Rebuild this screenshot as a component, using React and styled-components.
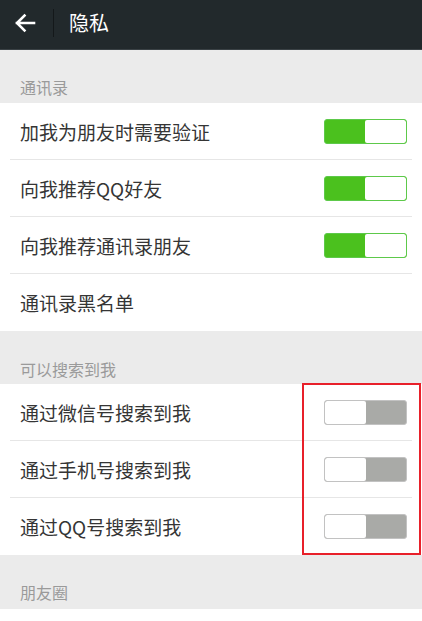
import React from "react";
import styled, { createGlobalStyle } from "styled-components";

const Global = createGlobalStyle`
  html, body { margin: 0; padding: 0; background: #ffffff; }
  body { font-family: "Noto Sans CJK SC", "Noto Sans", sans-serif; }
  * { box-sizing: border-box; }
`;

const Page = styled.div`
  width: 422px;
  min-height: 621px;
  background: #ffffff;
  display: flex;
  flex-direction: column;
`;

const Header = styled.header`
  height: 50px;
  background: #22292c;
  display: flex;
  align-items: center;
  border-bottom: 1px solid #3a4145;
`;

const BackButton = styled.div`
  width: 53px;
  height: 100%;
  display: flex;
  align-items: center;
  justify-content: center;
  padding-right: 4px;
  padding-bottom: 4px;
`;

const Divider = styled.div`
  width: 1px;
  height: 28px;
  background: #14181a;
  margin-bottom: 4px;
`;

const Title = styled.h1`
  margin: 0 0 4px 15px;
  font-size: 20px;
  font-weight: 400;
  color: #ffffff;
  line-height: 1;
`;

const SectionHeader = styled.div`
  height: ${(p) => p.$h}px;
  background: #ebebeb;
  display: flex;
  align-items: flex-end;
  padding: 0 0 ${(p) => p.$pb}px 20px;
  font-size: 16px;
  line-height: 20px;
  color: #9a9a9a;
`;

const Group = styled.div`
  position: relative;
  background: #ffffff;
`;

const Row = styled.div`
  height: 57px;
  padding: 0 10px;
`;

const RowInner = styled.div`
  height: 100%;
  display: flex;
  align-items: center;
  justify-content: space-between;
  padding: 0 5px 0 10px;
  border-bottom: ${(p) => (p.$last ? "none" : "1px solid #e6e6e6")};
`;

const Label = styled.span`
  font-size: 19px;
  color: #353535;
  line-height: 1;
`;

const Toggle = styled.div`
  width: 83px;
  height: 25px;
  border-radius: 3px;
  border: 1px solid ${(p) => (p.$on ? "#5dc94a" : "#c2c2c2")};
  background: ${(p) => (p.$on ? "#4bc11e" : "#a9aaa7")};
  display: flex;
  justify-content: ${(p) => (p.$on ? "flex-end" : "flex-start")};
  overflow: hidden;
`;

const Knob = styled.div`
  width: 41px;
  height: 100%;
  background: #ffffff;
  border-radius: 2px;
`;

const Highlight = styled.div`
  position: absolute;
  left: 302px;
  top: -1px;
  width: 119px;
  height: 172px;
  border: 2px solid #e8202a;
  pointer-events: none;
`;

const Rest = styled.div`
  flex: 1;
  background: #ffffff;
`;

const ArrowIcon = () => (
  <svg width="22" height="22" viewBox="0 0 22 22">
    <path
      d="M20 11 H3 M10.5 3.5 L3 11 L10.5 18.5"
      fill="none"
      stroke="#ffffff"
      strokeWidth="2.6"
      strokeLinecap="square"
      strokeLinejoin="miter"
    />
  </svg>
);

const SettingRow = ({ label, toggle, last }) => (
  <Row>
    <RowInner $last={last}>
      <Label>{label}</Label>
      {toggle !== undefined && (
        <Toggle $on={toggle}>
          <Knob />
        </Toggle>
      )}
    </RowInner>
  </Row>
);

export default function App() {
  return (
    <>
      <Global />
      <Page>
        <Header>
          <BackButton>
            <ArrowIcon />
          </BackButton>
          <Divider />
          <Title>隐私</Title>
        </Header>
        <SectionHeader $h={53} $pb={6}>通讯录</SectionHeader>
        <Group>
          <SettingRow label="加我为朋友时需要验证" toggle={true} />
          <SettingRow label="向我推荐QQ好友" toggle={true} />
          <SettingRow label="向我推荐通讯录朋友" toggle={true} />
          <SettingRow label="通讯录黑名单" last />
        </Group>
        <SectionHeader $h={53} $pb={5}>可以搜索到我</SectionHeader>
        <Group>
          <SettingRow label="通过微信号搜索到我" toggle={false} />
          <SettingRow label="通过手机号搜索到我" toggle={false} />
          <SettingRow label="通过QQ号搜索到我" toggle={false} last />
          <Highlight />
        </Group>
        <SectionHeader $h={54} $pb={7}>朋友圈</SectionHeader>
        <Rest />
      </Page>
    </>
  );
}
